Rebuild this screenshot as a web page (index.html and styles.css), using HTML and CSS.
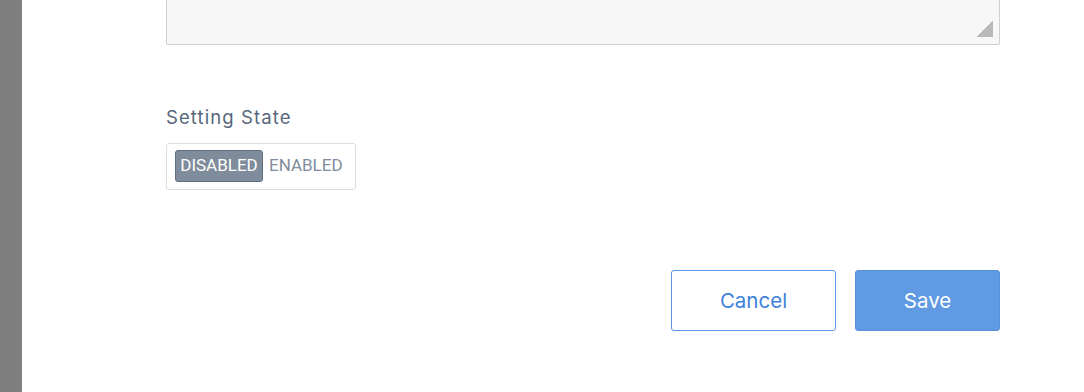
FILE: index.html
```html
<!DOCTYPE html>
<html>
<head>
<meta charset="utf-8">
<link rel="stylesheet" href="styles.css">
</head>
<body>
<div class="layout">
  <aside class="sidebar"></aside>
  <main class="main">
    <form class="form">
      <textarea class="textarea"></textarea>
      <div class="field">
        <label class="label">Setting State</label>
        <div class="toggle">
          <button type="button" class="toggle-opt active">DISABLED</button>
          <button type="button" class="toggle-opt">ENABLED</button>
        </div>
      </div>
      <div class="actions">
        <button type="button" class="btn btn-secondary">Cancel</button>
        <button type="button" class="btn btn-primary">Save</button>
      </div>
    </form>
  </main>
</div>
</body>
</html>
```
FILE: styles.css
```css
html, body {
  margin: 0;
  padding: 0;
  background: #fff;
  font-family: Inter, "Noto Sans", sans-serif;
}
.layout {
  display: flex;
  height: 392px;
  overflow: hidden;
}
.sidebar {
  width: 22px;
  flex: 0 0 22px;
  background: #7f7f7f;
}
.main {
  flex: 1;
  padding-left: 144px;
  padding-right: 84px;
}
.form {
  display: flex;
  flex-direction: column;
  margin-top: -40px;
}
.textarea {
  display: block;
  box-sizing: border-box;
  width: 834px;
  height: 85px;
  margin: 0;
  border: 1px solid #cfcfcf;
  border-radius: 2px;
  background-color: #f7f7f7;
  background-image: linear-gradient(to bottom right, transparent 50%, #b9b9b9 50%);
  background-size: 16px 16px;
  background-position: right 6px bottom 7px;
  background-repeat: no-repeat;
  resize: none;
  outline: none;
}
.field {
  display: flex;
  flex-direction: column;
  align-items: flex-start;
  margin-top: 60px;
}
.label {
  font-size: 18.5px;
  line-height: 24px;
  letter-spacing: 1.1px;
  color: #56667c;
  margin-bottom: 14px;
}
.toggle {
  display: flex;
  align-items: flex-start;
  box-sizing: border-box;
  width: 190px;
  height: 47px;
  padding: 6px 8px 0;
  border: 1px solid #dcdcdc;
  border-radius: 3px;
}
.toggle-opt {
  font-family: Roboto, "Liberation Sans", sans-serif;
  font-size: 17px;
  height: 32px;
  padding: 0 3px 3px 5px;
  border: 1px solid transparent;
  border-radius: 3px;
  background: transparent;
  color: #808c9c;
  cursor: pointer;
}
.toggle-opt.active {
  width: 88px;
  padding: 0 0 3px;
  background: #7f8c9c;
  border-color: #5f6d80;
  color: #fff;
}
.actions {
  display: flex;
  justify-content: flex-end;
  gap: 19px;
  margin-top: 80px;
}
.btn {
  font-family: inherit;
  font-size: 20.5px;
  height: 61px;
  padding-bottom: 2px;
  border-radius: 3px;
  cursor: pointer;
}
.btn-secondary {
  width: 165px;
  background: #fff;
  border: 1px solid #5a97e2;
  color: #3d82da;
}
.btn-primary {
  width: 145px;
  background: #5f9ae2;
  border: 1px solid #5890dc;
  color: #fff;
}
```
